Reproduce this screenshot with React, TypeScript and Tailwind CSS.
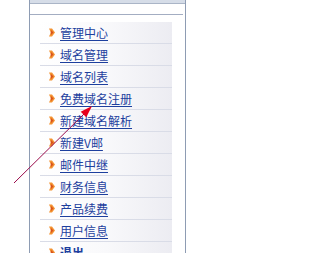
const items = [
  '管理中心',
  '域名管理',
  '域名列表',
  '免费域名注册',
  '新建域名解析',
  '新建V邮',
  '邮件中继',
  '财务信息',
  '产品续费',
  '用户信息',
  '退出',
]

function Bullet() {
  return (
    <svg width="6" height="9" viewBox="0 0 6 9" className="shrink-0">
      <polygon points="0,0.5 3,0.5 6,4.5 3,8.5 0,8.5 1.8,4.5" fill="#f39332" />
      <polygon points="2,2 4.5,4.5 2,7 1.8,4.5" fill="#d9531c" />
    </svg>
  )
}

export default function App() {
  return (
    <div
      className="relative w-[203px] h-[253px] overflow-hidden bg-white"
      style={{ fontFamily: '"Noto Sans CJK SC", "Noto Sans", sans-serif' }}
    >
      <div className="ml-[29px] w-[157px] h-full border-x border-[#8e9cb3]">
        <div className="h-[4px] bg-[#d6dde8] border-b border-[#aab5c7]" />
        <div className="mt-[10px] mr-[2px] border-t border-[#a3adc2]" />
        <div className="pt-[7px] pl-[10px]">
          {items.map((label) => (
            <div
              key={label}
              className="flex items-center gap-[5px] w-[132px] h-[22px] pl-[9px] border-b border-[#d9dce7] bg-linear-to-r from-white via-[#f9f9fb] to-[#ececf2]"
            >
              <Bullet />
              <a
                href="#"
                className={`text-[12px] leading-[14px] text-[#1d3f9e] underline underline-offset-[2px] ${
                  label === '退出' ? 'font-bold' : ''
                }`}
              >
                {label}
              </a>
            </div>
          ))}
        </div>
      </div>

      {/* red pointer */}
      <svg
        className="absolute inset-0 pointer-events-none"
        width="203"
        height="253"
        viewBox="0 0 203 253"
      >
        <line x1="14" y1="183" x2="86" y2="112" stroke="#9a0a4a" strokeWidth="1" />
        <polygon points="92,106 86.3,117.3 80.7,111.7" fill="#e8001a" />
      </svg>
    </div>
  )
}
